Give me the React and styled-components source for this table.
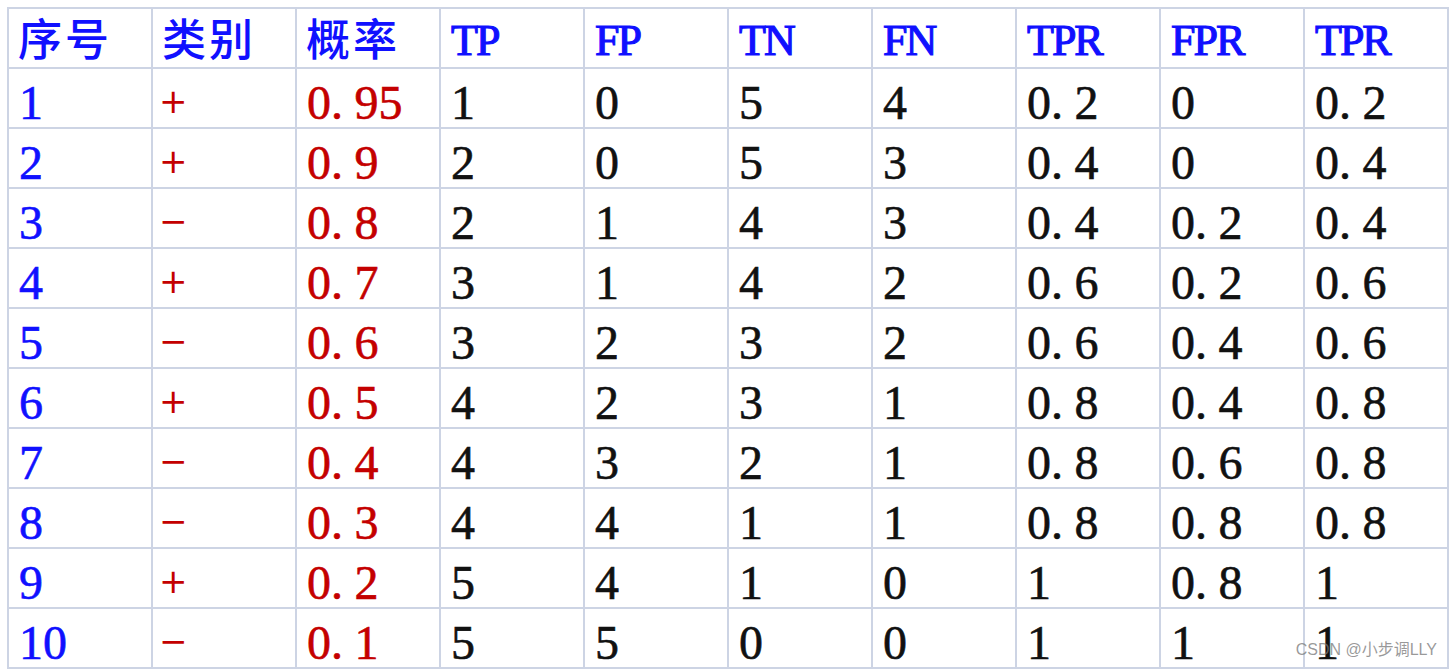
import React from 'react';
import styled, { createGlobalStyle } from 'styled-components';

const GlobalStyle = createGlobalStyle`
  html, body {
    margin: 0;
    padding: 0;
    background: #ffffff;
  }
`;

const Page = styled.div`
  position: relative;
  width: 1452px;
  height: 670px;
  padding: 7px 0 0 7px;
  box-sizing: border-box;
  overflow: hidden;
  background: #fff;
`;

const Table = styled.table`
  border-collapse: collapse;
  table-layout: fixed;
  width: 1442px;
  font-family: "Liberation Serif", "Noto Sans CJK SC", serif;
`;

const Col = styled.col`
  width: 144px;
`;

const Row = styled.tr`
  height: 60px;
`;

const HeadCell = styled.th`
  box-sizing: border-box;
  height: 60px;
  padding: ${p => (p.$cjk ? '0 0 2px 9px' : '6px 0 0 10px')};
  border: 2px solid #cdd4e4;
  text-align: left;
  vertical-align: middle;
  color: #1010ff;
  font-weight: ${p => (p.$cjk ? 500 : 400)};
  font-size: ${p => (p.$cjk ? '44px' : '44px')};
  font-family: ${p => (p.$cjk ? '"Noto Sans CJK SC", sans-serif' : '"Liberation Serif", serif')};
  line-height: 1.1;
  letter-spacing: ${p => (p.$cjk ? '3px' : '-2px')};
  -webkit-text-stroke: ${p => (p.$cjk ? '0' : '1.2px #1010ff')};
  white-space: nowrap;
`;

const Cell = styled.td`
  box-sizing: border-box;
  height: 60px;
  padding: 10px 0 0 10px;
  border: 2px solid #cdd4e4;
  vertical-align: middle;
  font-size: 48px;
  line-height: 1;
  color: ${p => p.$color || '#111'};
  white-space: nowrap;
  overflow: hidden;
  -webkit-text-stroke: 0.6px ${p => p.$color || '#111'};
`;

const Dot = styled.span`
  padding-right: 0.24em;
`;

const Sign = styled.span`
  display: inline-block;
  font-family: "DejaVu Sans", sans-serif;
  font-size: 34px;
  margin-left: -4px;
  -webkit-text-stroke: 0;
  transform: translateY(-6px);
`;

const Watermark = styled.div`
  position: absolute;
  right: 15px;
  bottom: 10px;
  font-family: "Liberation Sans", "Noto Sans CJK SC", sans-serif;
  font-size: 16px;
  color: rgba(120, 120, 120, 0.75);
`;

const headers = ['序号', '类别', '概率', 'TP', 'FP', 'TN', 'FN', 'TPR', 'FPR', 'TPR'];

const rows = [
  [1, '+', '0.95', 1, 0, 5, 4, '0.2', '0', '0.2'],
  [2, '+', '0.9', 2, 0, 5, 3, '0.4', '0', '0.4'],
  [3, '−', '0.8', 2, 1, 4, 3, '0.4', '0.2', '0.4'],
  [4, '+', '0.7', 3, 1, 4, 2, '0.6', '0.2', '0.6'],
  [5, '−', '0.6', 3, 2, 3, 2, '0.6', '0.4', '0.6'],
  [6, '+', '0.5', 4, 2, 3, 1, '0.8', '0.4', '0.8'],
  [7, '−', '0.4', 4, 3, 2, 1, '0.8', '0.6', '0.8'],
  [8, '−', '0.3', 4, 4, 1, 1, '0.8', '0.8', '0.8'],
  [9, '+', '0.2', 5, 4, 1, 0, '1', '0.8', '1'],
  [10, '−', '0.1', 5, 5, 0, 0, '1', '1', '1'],
];

const Num = ({ value }) => {
  const text = String(value);
  if (!text.includes('.')) return text;
  const [a, b] = text.split('.');
  return (
    <>
      {a}
      <Dot>.</Dot>
      {b}
    </>
  );
};

const colorFor = i => {
  if (i === 0) return '#1010ff';
  if (i === 1 || i === 2) return '#c40000';
  return '#111';
};

export default function App() {
  return (
    <Page>
      <GlobalStyle />
      <Table>
        <colgroup>
          {headers.map((_, i) => (
            <Col key={i} />
          ))}
        </colgroup>
        <thead>
          <Row>
            {headers.map((h, i) => (
              <HeadCell key={i} $cjk={i < 3}>
                {h}
              </HeadCell>
            ))}
          </Row>
        </thead>
        <tbody>
          {rows.map((row, r) => (
            <Row key={r}>
              {row.map((v, i) => (
                <Cell key={i} $color={colorFor(i)}>
                  {i === 1 ? <Sign>{v}</Sign> : <Num value={v} />}
                </Cell>
              ))}
            </Row>
          ))}
        </tbody>
      </Table>
      <Watermark>CSDN @小步调LLY</Watermark>
    </Page>
  );
}
